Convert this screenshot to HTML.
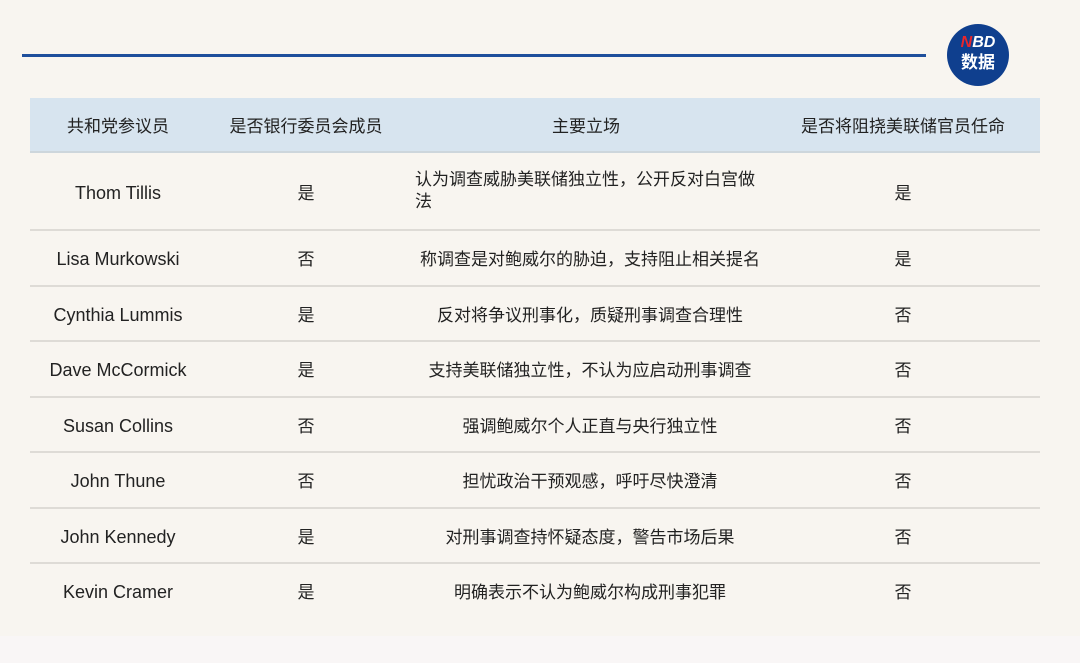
<!DOCTYPE html>
<html><head><meta charset="utf-8"><style>
html,body{margin:0;padding:0}
body{width:1080px;height:663px;background:#f9f6f6;position:relative;overflow:hidden;font-family:"Liberation Sans","Noto Sans CJK SC",sans-serif;color:#222}
.bg{position:absolute;left:0;top:0;width:1080px;height:636px;background:#f8f5f0}
.line{position:absolute;left:22px;top:54px;width:904px;height:3px;background:#1f4f9c}
.logo{position:absolute;left:947px;top:24px;width:62px;height:62px;border-radius:50%;background:#0f3f8e;color:#fff;text-align:center;font-weight:bold}
.logo .a{position:absolute;top:10px;left:0;right:0;font-size:16px;line-height:18px;font-style:italic}
.logo .b{position:absolute;top:29px;left:0;right:0;font-size:17px;line-height:20px}
table{position:absolute;left:30px;top:98px;width:1010px;border-collapse:collapse;font-size:17px}
td,th{text-align:center;padding:0;font-weight:normal;border-bottom:2px solid #dedbd6}
th{background:#d7e4ef;height:53px;border-bottom:2px solid #cdd6dc}
tr.r td{height:53.5px}
tr.f td{height:76px}
td.n{font-size:18px;padding-top:4px;box-sizing:border-box}
td.c{padding-left:8px}
.l{text-align:left;padding-left:9px;padding-right:0;line-height:22px}
</style></head><body>
<div class="bg"></div>
<div class="line"></div>
<div class="logo"><div class="a"><span style="color:#e8262b">N</span>BD</div><div class="b">数据</div></div>
<table>
<colgroup><col style="width:176px"><col style="width:200px"><col style="width:360px"><col style="width:274px"></colgroup>
<tr><th>共和党参议员</th><th>是否银行委员会成员</th><th>主要立场</th><th>是否将阻挠美联储官员任命</th></tr>
<tr class="f"><td class="n">Thom Tillis</td><td>是</td><td class="l">认为调查威胁美联储独立性，公开反对白宫做法</td><td>是</td></tr>
<tr class="r"><td class="n">Lisa Murkowski</td><td>否</td><td class="c">称调查是对鲍威尔的胁迫，支持阻止相关提名</td><td>是</td></tr>
<tr class="r"><td class="n">Cynthia Lummis</td><td>是</td><td class="c">反对将争议刑事化，质疑刑事调查合理性</td><td>否</td></tr>
<tr class="r"><td class="n">Dave McCormick</td><td>是</td><td class="c">支持美联储独立性，不认为应启动刑事调查</td><td>否</td></tr>
<tr class="r"><td class="n">Susan Collins</td><td>否</td><td class="c">强调鲍威尔个人正直与央行独立性</td><td>否</td></tr>
<tr class="r"><td class="n">John Thune</td><td>否</td><td class="c">担忧政治干预观感，呼吁尽快澄清</td><td>否</td></tr>
<tr class="r"><td class="n">John Kennedy</td><td>是</td><td class="c">对刑事调查持怀疑态度，警告市场后果</td><td>否</td></tr>
<tr class="r"><td class="n" style="border:none">Kevin Cramer</td><td style="border:none">是</td><td class="c" style="border:none">明确表示不认为鲍威尔构成刑事犯罪</td><td style="border:none">否</td></tr>
</table>
</body></html>
